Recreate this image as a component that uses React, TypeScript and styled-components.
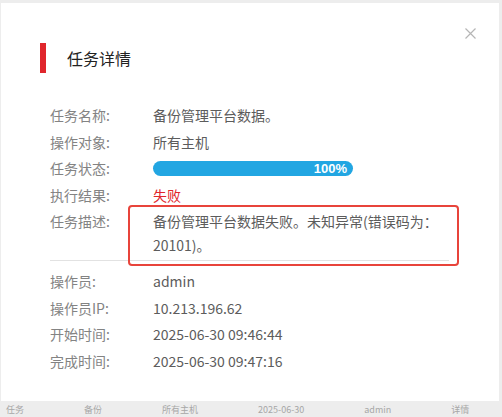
import React from 'react'
import styled, { createGlobalStyle } from 'styled-components'

const GlobalStyle = createGlobalStyle`
	html, body {
		margin: 0;
		padding: 0;
	}
	body {
		width: 502px;
		height: 417px;
		overflow: hidden;
		font-family: "Microsoft YaHei", "Noto Sans CJK SC", sans-serif;
	}
`

const Page = styled.div`
	position: relative;
	width: 502px;
	height: 417px;
	background: #ffffff;
	overflow: hidden;
	padding-top: 404px;
	box-sizing: border-box;
`

const BgRow = styled.div`
	display: flex;
	gap: 60px;
	padding-left: 6px;
	font-size: 9px;
	line-height: 12px;
	color: #b4b4b4;
`

const Mask = styled.div`
	position: absolute;
	inset: 0;
	background: rgba(0, 0, 0, 0.07);
`

const Modal = styled.div`
	position: absolute;
	top: 3px;
	left: 1px;
	width: 498px;
	height: 398px;
	box-sizing: border-box;
	background: #fff;
	padding: 40px 50px 0 49px;
`

const Close = styled.button`
	position: absolute;
	top: 23px;
	right: 21px;
	width: 15px;
	height: 15px;
	padding: 0;
	border: 0;
	background: transparent;
	display: flex;
	align-items: center;
	justify-content: center;
	cursor: pointer;
`

const Header = styled.div`
	display: flex;
	align-items: center;
	gap: 21px;
	height: 30px;
	margin-left: -10px;
`

const Bar = styled.span`
	width: 6px;
	height: 30px;
	background: #e0262c;
`

const Title = styled.h2`
	margin: 0;
	font-size: 16px;
	font-weight: normal;
	color: #222;
`

const Section = styled.div<{ $top?: number }>`
	display: flex;
	flex-direction: column;
	gap: 2.5px;
	margin-top: ${(p) => p.$top ?? 0}px;
`

const Row = styled.div<{ $top?: boolean }>`
	display: grid;
	grid-template-columns: 103px 1fr;
	align-items: ${(p) => (p.$top ? 'start' : 'center')};
	font-size: 14px;
	line-height: 24px;
	min-height: 24px;
`

const Label = styled.span`
	color: #838383;
`

const Value = styled.span<{ $danger?: boolean }>`
	color: ${(p) => (p.$danger ? '#e0252b' : '#5c5c5c')};
`

const Divider = styled.hr`
	border: 0;
	border-top: 1px solid #e2e2e2;
	margin: 3px 0 8px;
`

const Progress = styled.div`
	height: 15px;
	border-radius: 8px;
	background: #22a6e2;
	display: flex;
	align-items: center;
	justify-content: flex-end;
	padding-right: 6px;
	box-sizing: border-box;
	color: #fff;
	font-family: "Liberation Sans", Arial, sans-serif;
	font-weight: bold;
	font-size: 13px;
	line-height: 15px;
`

const Highlight = styled.div`
	position: absolute;
	left: 127px;
	top: 202px;
	width: 331px;
	height: 61px;
	box-sizing: border-box;
	border: 2px solid #e8443b;
	border-radius: 4px;
	pointer-events: none;
`

const topRows = [
	{ label: '任务名称:', value: '备份管理平台数据。' },
	{ label: '操作对象:', value: '所有主机' },
]

const bottomRows = [
	{ label: '操作员:', value: 'admin' },
	{ label: '操作员IP:', value: '10.213.196.62' },
	{ label: '开始时间:', value: '2025-06-30 09:46:44' },
	{ label: '完成时间:', value: '2025-06-30 09:47:16' },
]

export default function App() {
	const percent = 100

	return (
		<Page>
			<GlobalStyle />
			<BgRow>
				<span>任务</span>
				<span>备份</span>
				<span>所有主机</span>
				<span>2025-06-30</span>
				<span>admin</span>
				<span>详情</span>
			</BgRow>
			<Mask />
			<Modal>
				<Close aria-label="关闭">
					<svg width="11" height="11" viewBox="0 0 11 11">
						<path d="M0.5 0.5 L10.5 10.5 M10.5 0.5 L0.5 10.5" stroke="#b5b5b5" strokeWidth="1.2" />
					</svg>
				</Close>
				<Header>
					<Bar />
					<Title>任务详情</Title>
				</Header>
				<Section $top={30}>
					{topRows.map((r) => (
						<Row key={r.label}>
							<Label>{r.label}</Label>
							<Value>{r.value}</Value>
						</Row>
					))}
					<Row>
						<Label>任务状态:</Label>
						<Progress style={{ width: 2 * percent }}>{percent}%</Progress>
					</Row>
					<Row>
						<Label>执行结果:</Label>
						<Value $danger>失败</Value>
					</Row>
					<Row $top>
						<Label>任务描述:</Label>
						<Value>备份管理平台数据失败。未知异常(错误码为：20101)。</Value>
					</Row>
				</Section>
				<Divider />
				<Section>
					{bottomRows.map((r) => (
						<Row key={r.label}>
							<Label>{r.label}</Label>
							<Value>{r.value}</Value>
						</Row>
					))}
				</Section>
				<Highlight />
			</Modal>
		</Page>
	)
}
